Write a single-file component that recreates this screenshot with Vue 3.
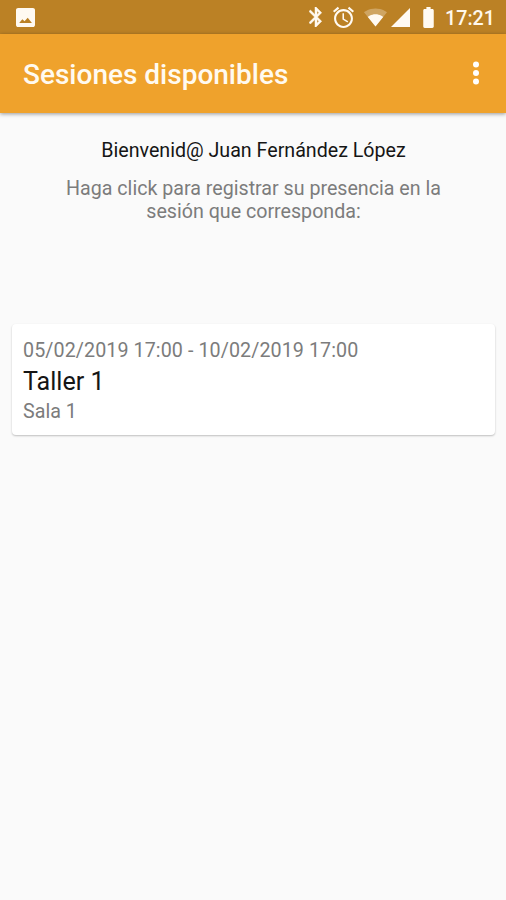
<template>
  <div class="screen">
    <div class="status-bar">
      <svg class="icon-image" viewBox="3 3 18 18">
        <path d="M21 19V5c0-1.1-.9-2-2-2H5c-1.1 0-2 .9-2 2v14c0 1.1.9 2 2 2h14c1.1 0 2-.9 2-2zM6 17.200l3-3.600 2.100 2 3-3.400 4 5z" />
      </svg>
      <div class="status-icons">
        <svg class="icon-bluetooth" viewBox="5 2 13 20">
          <path d="M17.71 7.71L12 2h-1v7.59L6.41 5 5 6.41 10.59 12 5 17.59 6.41 19 11 14.41V22h1l5.71-5.71-4.3-4.29 4.3-4.29zM13 5.83l1.88 1.88L13 9.59V5.83zm1.88 10.46L13 18.17v-3.76l1.88 1.88z" />
        </svg>
        <svg class="icon-alarm" viewBox="2 2 20 20">
          <path d="M22 5.72l-4.6-3.86-1.29 1.53 4.6 3.86L22 5.72zM7.88 3.39L6.6 1.86 2 5.71l1.29 1.53 4.59-3.85zM12.5 8H11v6l4.75 2.85.75-1.23-4-2.37V8zM12 4c-4.97 0-9 4.03-9 9s4.02 9 9 9 9-4.03 9-9-4.03-9-9-9zm0 16c-3.87 0-7-3.13-7-7s3.13-7 7-7 7 3.13 7 7-3.13 7-7 7z" />
        </svg>
        <svg class="icon-wifi" viewBox="0 0 24 19">
          <path opacity="0.3" d="M12 19L24 4C23.500 3.600 19 0 12 0S.5 3.600 0 4z" />
          <path d="M12 19l8.200-10.200C19.800 8.500 16.700 6 12 6S4.200 8.500 3.800 8.800z" />
        </svg>
        <svg class="icon-signal" viewBox="0 0 20 20">
          <path d="M0 20h20V0z" />
        </svg>
        <svg class="icon-battery" viewBox="7 2 10 20">
          <path d="M15.670 4H14V2h-4v2H8.330C7.600 4 7 4.600 7 5.330v15.330C7 21.400 7.600 22 8.330 22h7.330c.74 0 1.340-.6 1.340-1.330V5.330C17 4.600 16.400 4 15.670 4z" />
        </svg>
        <span class="clock">17:21</span>
      </div>
    </div>

    <header class="toolbar">
      <h1 class="toolbar-title">Sesiones disponibles</h1>
      <button class="menu-btn" aria-label="Más opciones">
        <svg viewBox="0 0 6 24">
          <circle cx="3" cy="3.500" r="3" />
          <circle cx="3" cy="12" r="3" />
          <circle cx="3" cy="20.500" r="3" />
        </svg>
      </button>
    </header>

    <main class="content">
      <p class="welcome">Bienvenid@ {{ usuario }}</p>
      <p class="hint">Haga click para registrar su presencia en la<br />sesión que corresponda:</p>

      <div class="sesiones">
        <div v-for="sesion in sesiones" :key="sesion.id" class="sesion-card">
          <div class="sesion-fecha">{{ sesion.inicio }} - {{ sesion.fin }}</div>
          <div class="sesion-nombre">{{ sesion.nombre }}</div>
          <div class="sesion-sala">{{ sesion.sala }}</div>
        </div>
      </div>
    </main>
  </div>
</template>

<script setup>
import { ref } from 'vue';

const usuario = ref('Juan Fernández López');

const sesiones = ref([
  {
    id: 1,
    inicio: '05/02/2019 17:00',
    fin: '10/02/2019 17:00',
    nombre: 'Taller 1',
    sala: 'Sala 1'
  }
]);
</script>

<style>
body {
  background-color: #fafafa;
}
</style>

<style scoped>
.screen {
  min-height: 900px;
  background-color: #fafafa;
  font-family: Roboto, sans-serif;
}

.status-bar {
  display: flex;
  justify-content: space-between;
  align-items: center;
  height: 34px;
  padding: 0 11px 0 16px;
  box-sizing: border-box;
  background-color: #bb8125;
  color: #fff8ec;
}

.status-bar svg {
  display: block;
  flex: none;
  fill: #fffaf2;
}

.icon-image {
  width: 19px;
  height: 19px;
}

.status-icons {
  display: flex;
  align-items: center;
}

.icon-bluetooth {
  width: 13px;
  height: 20px;
  margin-right: 11px;
  stroke: #fffaf2;
  stroke-width: 0.5;
}

.status-bar .icon-alarm {
  width: 21px;
  height: 21px;
  margin-right: 10px;
  overflow: visible;
}

.icon-wifi {
  width: 23px;
  height: 19px;
  margin-right: 4px;
}

.icon-signal {
  width: 19px;
  height: 19px;
  margin-right: 12px;
}

.icon-battery {
  width: 13px;
  height: 21px;
  margin-right: 10px;
}

.clock {
  font-size: 19.7px;
  font-weight: 500;
  line-height: 34px;
  padding-top: 3px;
}

.toolbar {
  display: flex;
  justify-content: space-between;
  align-items: center;
  height: 79px;
  padding: 0 27px 0 23px;
  box-sizing: border-box;
  background-color: #efa22c;
  box-shadow: 0 1px 4px rgba(0, 0, 0, 0.4);
}

.toolbar-title {
  margin: 2px 0 0;
  color: #fffaf0;
  font-size: 28px;
  font-weight: 500;
  line-height: 34px;
}

.menu-btn {
  padding: 0 0 1px;
  border: none;
  background: none;
  cursor: pointer;
}

.menu-btn svg {
  display: block;
  width: 6px;
  height: 24px;
  fill: #fff;
}

.content {
  padding: 26px 11px 0 12px;
}

.welcome {
  margin: 0;
  color: #151515;
  font-size: 19.65px;
  line-height: 24px;
  text-align: center;
}

.hint {
  margin: 14px 0 0;
  color: #7c7c7c;
  font-size: 19.65px;
  line-height: 23px;
  text-align: center;
}

.sesiones {
  margin-top: 101px;
}

.sesion-card {
  height: 111px;
  padding: 15px 11px;
  box-sizing: border-box;
  border-radius: 4px;
  background-color: #ffffff;
  box-shadow: 0 1px 2px rgba(0, 0, 0, 0.24);
  cursor: pointer;
}

.sesion-fecha,
.sesion-sala {
  color: #7c7c7c;
  font-size: 19.7px;
  line-height: 24px;
}

.sesion-fecha {
  letter-spacing: 0.08px;
}

.sesion-nombre {
  color: #151515;
  font-size: 25.1px;
  line-height: 30px;
  margin: 4px 0 3px;
}
</style>
